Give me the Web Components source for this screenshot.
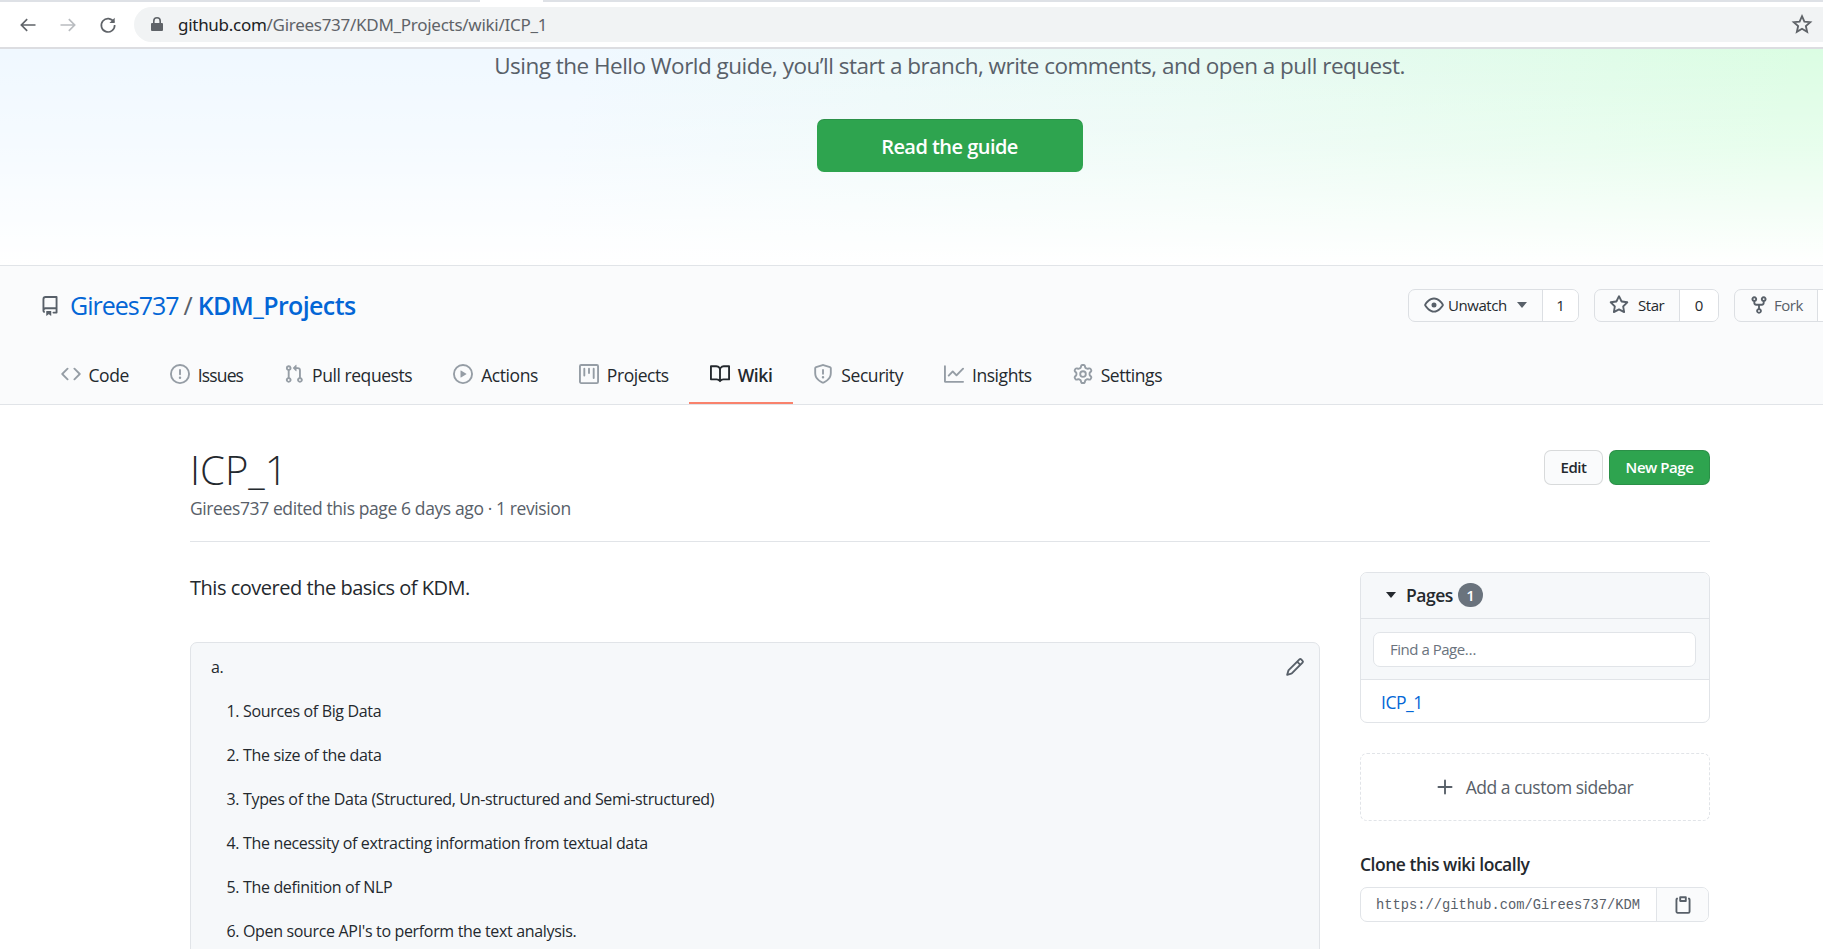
<!DOCTYPE html>
<html lang="en"><head><meta charset="utf-8"><title>ICP_1 · Girees737/KDM_Projects Wiki</title>
<style>
html{margin:0;padding:0;height:949px;overflow:hidden;background:#fff}
body{margin:0;padding:0;width:1899px;height:949px;overflow:hidden;font-family:"Open Sans","Noto Sans",sans-serif;color:#24292e}
browser-bar{width:1823px}
</style></head><body>
<browser-bar url-host="github.com" url-path="/Girees737/KDM_Projects/wiki/ICP_1"></browser-bar>
<hero-banner></hero-banner>
<repo-head>
  <repo-tab icon="code" slot="tabs">Code</repo-tab>
  <repo-tab icon="issue" slot="tabs" style="letter-spacing:-.05em">Issues</repo-tab>
  <repo-tab icon="pr" slot="tabs">Pull requests</repo-tab>
  <repo-tab icon="play" slot="tabs">Actions</repo-tab>
  <repo-tab icon="project" slot="tabs">Projects</repo-tab>
  <repo-tab icon="book" slot="tabs" selected>Wiki</repo-tab>
  <repo-tab icon="shield" slot="tabs">Security</repo-tab>
  <repo-tab icon="graph" slot="tabs">Insights</repo-tab>
  <repo-tab icon="gear" slot="tabs">Settings</repo-tab>
</repo-head>
<wiki-page>
  <wiki-markdown slot="main"></wiki-markdown>
  <wiki-sidebar slot="side"></wiki-sidebar>
</wiki-page>
<script>
const P={
repo:"M2 2.5A2.5 2.5 0 014.5 0h8.75a.75.75 0 01.75.75v12.5a.75.75 0 01-.75.75h-2.5a.75.75 0 110-1.5h1.75v-2h-8a1 1 0 00-.714 1.7.75.75 0 01-1.072 1.05A2.495 2.495 0 012 11.5v-9zm10.5-1V9h-8c-.356 0-.694.074-1 .208V2.5a1 1 0 011-1h8zM5 12.25v3.25a.25.25 0 00.4.2l1.45-1.087a.25.25 0 01.3 0L8.6 15.7a.25.25 0 00.4-.2v-3.25a.25.25 0 00-.25-.25h-3.5a.25.25 0 00-.25.25z",
code:"M4.72 3.22a.75.75 0 011.06 1.06L2.06 8l3.72 3.72a.75.75 0 11-1.06 1.06L.47 8.53a.75.75 0 010-1.06l4.25-4.25zm6.56 0a.75.75 0 10-1.06 1.06L13.94 8l-3.72 3.72a.75.75 0 101.06 1.06l4.25-4.25a.75.75 0 000-1.06l-4.25-4.25z",
issue:"M8 1.5a6.5 6.5 0 100 13 6.5 6.5 0 000-13zM0 8a8 8 0 1116 0A8 8 0 010 8zm9 3a1 1 0 11-2 0 1 1 0 012 0zm-.25-6.25a.75.75 0 00-1.5 0v3.5a.75.75 0 001.5 0v-3.5z",
pr:"M7.177 3.073L9.573.677A.25.25 0 0110 .854v4.792a.25.25 0 01-.427.177L7.177 3.427a.25.25 0 010-.354zM3.75 2.5a.75.75 0 100 1.5.75.75 0 000-1.5zm-2.25.75a2.25 2.25 0 113 2.122v5.256a2.251 2.251 0 11-1.5 0V5.372A2.25 2.25 0 011.5 3.25zM11 2.5h-1V4h1a1 1 0 011 1v5.628a2.251 2.251 0 101.5 0V5A2.5 2.5 0 0011 2.5zm1 10.25a.75.75 0 111.5 0 .75.75 0 01-1.5 0zM3.75 12a.75.75 0 100 1.5.75.75 0 000-1.5z",
play:"M1.5 8a6.5 6.5 0 1113 0 6.5 6.5 0 01-13 0zM8 0a8 8 0 100 16A8 8 0 008 0zM6.379 5.227A.25.25 0 006 5.442v5.117a.25.25 0 00.379.214l4.264-2.559a.25.25 0 000-.428L6.379 5.227z",
project:"M1.75 0A1.75 1.75 0 000 1.75v12.5C0 15.216.784 16 1.75 16h12.5A1.75 1.75 0 0016 14.25V1.75A1.75 1.75 0 0014.25 0H1.75zM1.5 1.75a.25.25 0 01.25-.25h12.5a.25.25 0 01.25.25v12.5a.25.25 0 01-.25.25H1.75a.25.25 0 01-.25-.25V1.75zM11.75 3a.75.75 0 00-.75.75v7.5a.75.75 0 001.5 0v-7.5a.75.75 0 00-.75-.75zm-8.25.75a.75.75 0 011.5 0v5.5a.75.75 0 01-1.5 0v-5.5zM8 3a.75.75 0 00-.75.75v3.5a.75.75 0 001.5 0v-3.5A.75.75 0 008 3z",
book:"M0 1.75A.75.75 0 01.75 1h4.253c1.227 0 2.317.59 3 1.501A3.744 3.744 0 0111.006 1h4.245a.75.75 0 01.75.75v10.5a.75.75 0 01-.75.75h-4.507a2.25 2.25 0 00-1.591.659l-.622.621a.75.75 0 01-1.06 0l-.622-.621A2.25 2.25 0 005.258 13H.75a.75.75 0 01-.75-.75V1.75zm8.755 3a2.25 2.25 0 012.25-2.25H14.5v9h-3.757c-.71 0-1.4.201-1.992.572l.004-7.322zm-1.504 7.324l.004-5.073-.002-2.253A2.25 2.25 0 005.003 2.5H1.5v9h3.757a3.75 3.75 0 011.994.574z",
shield:"M7.467.133a1.75 1.75 0 011.066 0l5.25 1.68A1.75 1.75 0 0115 3.48V7c0 1.566-.32 3.182-1.303 4.682-.983 1.498-2.585 2.813-5.032 3.855a1.7 1.7 0 01-1.33 0c-2.447-1.042-4.049-2.357-5.032-3.855C1.32 10.182 1 8.566 1 7V3.48a1.75 1.75 0 011.217-1.667l5.25-1.68zm.61 1.429a.25.25 0 00-.153 0l-5.25 1.68a.25.25 0 00-.174.238V7c0 1.358.275 2.666 1.057 3.86.784 1.194 2.121 2.34 4.366 3.297a.2.2 0 00.154 0c2.245-.956 3.582-2.104 4.366-3.298C13.225 9.666 13.5 8.36 13.5 7V3.48a.25.25 0 00-.174-.237l-5.25-1.68zM9 10.5a1 1 0 11-2 0 1 1 0 012 0zm-.25-5.75a.75.75 0 10-1.5 0v3a.75.75 0 001.5 0v-3z",
graph:"M1.5 1.75a.75.75 0 00-1.5 0v12.5c0 .414.336.75.75.75h14.5a.75.75 0 000-1.5H1.5V1.75zm14.28 2.53a.75.75 0 00-1.06-1.06L10 7.94 7.53 5.47a.75.75 0 00-1.06 0L3.22 8.72a.75.75 0 001.06 1.06L7 7.06l2.47 2.47a.75.75 0 001.06 0l5.25-5.25z",
gear:"M7.429 1.525a6.593 6.593 0 011.142 0c.036.003.108.036.137.146l.289 1.105c.147.56.55.967.997 1.189.174.086.341.183.501.29.417.278.97.423 1.53.27l1.102-.303c.11-.03.175.016.195.046.219.31.41.641.573.989.014.031.022.11-.059.19l-.815.806c-.411.406-.562.957-.53 1.456a4.588 4.588 0 010 .582c-.032.499.119 1.05.53 1.456l.815.806c.08.08.073.159.059.19a6.494 6.494 0 01-.573.99c-.02.029-.086.074-.195.045l-1.103-.303c-.559-.153-1.112-.008-1.529.27-.16.107-.327.204-.5.29-.449.222-.851.628-.998 1.189l-.289 1.105c-.029.11-.101.143-.137.146a6.613 6.613 0 01-1.142 0c-.036-.003-.108-.037-.137-.146l-.289-1.105c-.147-.56-.55-.967-.997-1.189a4.502 4.502 0 01-.501-.29c-.417-.278-.97-.423-1.53-.27l-1.102.303c-.11.03-.175-.016-.195-.046a6.492 6.492 0 01-.573-.989c-.014-.031-.022-.11.059-.19l.815-.806c.411-.406.562-.957.53-1.456a4.587 4.587 0 010-.582c.032-.499-.119-1.05-.53-1.456l-.815-.806c-.08-.08-.073-.159-.059-.19a6.44 6.44 0 01.573-.99c.02-.029.086-.075.195-.045l1.103.303c.559.153 1.112.008 1.529-.27.16-.107.327-.204.5-.29.449-.222.851-.628.998-1.189l.289-1.105c.029-.11.101-.143.137-.146zM8 0c-.236 0-.47.01-.701.03-.743.065-1.29.615-1.458 1.261l-.29 1.106c-.017.066-.078.158-.211.224a5.994 5.994 0 00-.668.386c-.123.082-.233.09-.3.071L3.27 2.776c-.644-.177-1.392.02-1.82.63a7.977 7.977 0 00-.704 1.217c-.315.675-.111 1.422.363 1.891l.815.806c.05.048.098.147.088.294a6.084 6.084 0 000 .772c.01.147-.038.246-.088.294l-.815.806c-.474.469-.678 1.216-.363 1.891.2.428.436.835.704 1.218.428.609 1.176.806 1.82.63l1.103-.303c.066-.019.176-.011.299.071.213.143.436.272.668.386.133.066.194.158.212.224l.289 1.106c.169.646.715 1.196 1.458 1.26a8.094 8.094 0 001.402 0c.743-.064 1.29-.614 1.458-1.26l.29-1.106c.017-.066.078-.158.211-.224a5.98 5.98 0 00.668-.386c.123-.082.233-.09.3-.071l1.102.302c.644.177 1.392-.02 1.82-.63.268-.382.505-.789.704-1.217.315-.675.111-1.422-.364-1.891l-.814-.806c-.05-.048-.098-.147-.088-.294a6.1 6.1 0 000-.772c-.01-.147.039-.246.088-.294l.814-.806c.475-.469.679-1.216.364-1.891a7.992 7.992 0 00-.704-1.218c-.428-.609-1.176-.806-1.82-.63l-1.103.303c-.066.019-.176.011-.299-.071a5.991 5.991 0 00-.668-.386c-.133-.066-.194-.158-.212-.224L10.16 1.29C9.99.645 9.444.095 8.701.031A8.094 8.094 0 008 0zm1.5 8a1.5 1.5 0 11-3 0 1.5 1.5 0 013 0zM11 8a3 3 0 11-6 0 3 3 0 016 0z",
eye:"M1.679 7.932c.412-.621 1.242-1.75 2.366-2.717C5.175 4.242 6.527 3.5 8 3.5c1.473 0 2.824.742 3.955 1.715 1.124.967 1.954 2.096 2.366 2.717a.119.119 0 010 .136c-.412.621-1.242 1.75-2.366 2.717C10.825 11.758 9.473 12.5 8 12.5c-1.473 0-2.824-.742-3.955-1.715C2.92 9.818 2.09 8.69 1.679 8.068a.119.119 0 010-.136zM8 2c-1.981 0-3.67.992-4.933 2.078C1.797 5.169.88 6.423.43 7.1a1.619 1.619 0 000 1.798c.45.678 1.367 1.932 2.637 3.024C4.329 13.008 6.019 14 8 14c1.981 0 3.67-.992 4.933-2.078 1.27-1.091 2.187-2.345 2.637-3.023a1.619 1.619 0 000-1.798c-.45-.678-1.367-1.932-2.637-3.023C11.671 2.992 9.981 2 8 2zm0 8a2 2 0 100-4 2 2 0 000 4z",
star:"M8 .25a.75.75 0 01.673.418l1.882 3.815 4.21.612a.75.75 0 01.416 1.279l-3.046 2.97.719 4.192a.75.75 0 01-1.088.791L8 12.347l-3.766 1.98a.75.75 0 01-1.088-.79l.72-4.194L.818 6.374a.75.75 0 01.416-1.28l4.21-.611L7.327.668A.75.75 0 018 .25zm0 2.445L6.615 5.5a.75.75 0 01-.564.41l-3.097.45 2.24 2.184a.75.75 0 01.216.664l-.528 3.084 2.769-1.456a.75.75 0 01.698 0l2.77 1.456-.53-3.084a.75.75 0 01.216-.664l2.24-2.183-3.096-.45a.75.75 0 01-.564-.41L8 2.694z",
fork:"M5 3.25a.75.75 0 11-1.5 0 .75.75 0 011.5 0zm0 2.122a2.25 2.25 0 10-1.5 0v.878A2.25 2.25 0 005.75 8.5h1.5v2.128a2.251 2.251 0 101.5 0V8.5h1.5a2.25 2.25 0 002.25-2.25v-.878a2.25 2.25 0 10-1.5 0v.878a.75.75 0 01-.75.75h-4.5A.75.75 0 015 6.25v-.878zm3.75 7.378a.75.75 0 11-1.5 0 .75.75 0 011.5 0zm3-8.75a.75.75 0 100-1.5.75.75 0 000 1.5z",
pencil:"M11.013 1.427a1.75 1.75 0 012.474 0l1.086 1.086a1.75 1.75 0 010 2.474l-8.61 8.61c-.21.21-.47.364-.756.445l-3.251.93a.75.75 0 01-.927-.928l.929-3.25a1.75 1.75 0 01.445-.758l8.61-8.61zm1.414 1.06a.25.25 0 00-.354 0L10.811 3.75l1.439 1.44 1.263-1.263a.25.25 0 000-.354l-1.086-1.086zM11.189 6.25L9.75 4.81l-6.286 6.287a.25.25 0 00-.064.108l-.558 1.953 1.953-.558a.249.249 0 00.108-.064l6.286-6.286z",
clippy:"M5.75 1a.75.75 0 00-.75.75v3c0 .414.336.75.75.75h4.5a.75.75 0 00.75-.75v-3a.75.75 0 00-.75-.75h-4.5zm.75 3V2.5h3V4h-3zm-2.874-.467a.75.75 0 00-.752-1.298A1.75 1.75 0 002 3.75v9.5c0 .966.784 1.75 1.75 1.75h8.5A1.75 1.75 0 0014 13.25v-9.5a1.75 1.75 0 00-.874-1.515.75.75 0 10-.752 1.298.25.25 0 01.126.217v9.5a.25.25 0 01-.25.25h-8.5a.25.25 0 01-.25-.25v-9.5a.25.25 0 01.126-.217z",
plus:"M8 2a.75.75 0 01.75.75v4.5h4.5a.75.75 0 010 1.5h-4.5v4.5a.75.75 0 01-1.5 0v-4.5h-4.5a.75.75 0 010-1.5h4.5v-4.5A.75.75 0 018 2z"
};
const SANS='"Open Sans","Noto Sans",sans-serif';
function def(name,html,extra){
  const t=document.createElement('template');t.innerHTML=html;
  customElements.define(name,class extends HTMLElement{
    constructor(){super();this.attachShadow({mode:'open'}).appendChild(t.content.cloneNode(true));}
    connectedCallback(){if(extra)extra.call(this)}
  });
}
customElements.define('gh-icon',class extends HTMLElement{
  static get observedAttributes(){return ['name','size']}
  constructor(){super();this.attachShadow({mode:'open'})}
  connectedCallback(){this.render()}
  attributeChangedCallback(){this.render()}
  render(){
    const s=this.getAttribute('size')||20,n=this.getAttribute('name');
    this.shadowRoot.innerHTML=`<style>:host{display:inline-flex;flex:none;width:${s}px;height:${s}px;color:inherit}svg{display:block;fill:currentColor}</style><svg width="${s}" height="${s}" viewBox="0 0 16 16" aria-hidden="true"><path fill-rule="evenodd" d="${P[n]||''}"/></svg>`;
  }
});
def('browser-bar',`<style>
:host{display:block;height:49px;box-sizing:border-box;background:#fff;border-bottom:2px solid #dcdde1;position:relative;font-family:"Noto Sans",sans-serif}
.strip{height:2px;background:#dee1e6;display:flex}
.strip i{display:block;margin-left:480px;width:63px;height:2px;background:#fff}
.row{display:flex;align-items:center;height:45px}
.nav{display:flex;align-items:center;width:134px;padding-left:18px;box-sizing:border-box;gap:20px}
.nav svg{display:block;width:20px;height:20px;flex:none}
.pill{flex:1;height:35px;margin-top:-1px;background:#f1f3f4;border-radius:18px 0 0 18px;display:flex;align-items:center;position:relative}
.lock{margin-left:17px;width:12px;height:14px;flex:none}
.url{margin-left:15px;font-size:17px;letter-spacing:-.28px;color:#202124;white-space:nowrap}
.url span{color:#5f6368}
.star{margin-left:auto;margin-right:10px;width:22px;height:22px;flex:none}
</style>
<div class="strip"><i></i></div>
<div class="row">
 <div class="nav">
  <svg viewBox="0 0 24 24" fill="none" stroke="#5f6368" stroke-width="2"><path d="M21 12H4M11 5l-7 7 7 7"/></svg>
  <svg viewBox="0 0 24 24" fill="none" stroke="#b9bcc0" stroke-width="2"><path d="M3 12h17M13 5l7 7-7 7"/></svg>
  <svg viewBox="0 0 24 24" fill="none" stroke="#5f6368" stroke-width="2"><path d="M19 8.5A8 8 0 1 0 20 12"/><path d="M20 3.2v6.3h-6.3z" fill="#5f6368" stroke="none"/></svg>
 </div>
 <div class="pill">
  <svg class="lock" viewBox="0 0 12 14" fill="#5f6368"><path d="M2 6V4a4 4 0 0 1 8 0v2h1a1 1 0 0 1 1 1v6a1 1 0 0 1-1 1H1a1 1 0 0 1-1-1V7a1 1 0 0 1 1-1zm1.6 0h4.8V4a2.4 2.4 0 0 0-4.8 0z"/></svg>
  <div class="url">github.com<span>/Girees737/KDM_Projects/wiki/ICP_1</span></div>
  <svg class="star" viewBox="0 0 24 24" fill="none" stroke="#5f6368" stroke-width="2"><path d="M12 3.5l2.6 5.9 6.4.6-4.8 4.2 1.4 6.3L12 17.2l-5.6 3.3 1.4-6.3L3 10l6.4-.6z"/></svg>
 </div>
</div>`);
def('hero-banner',`<style>
:host{display:block;height:216px;box-sizing:border-box;background:linear-gradient(to bottom,rgba(255,255,255,0) 0%,rgba(255,255,255,.35) 45%,#fff 100%),linear-gradient(105deg,#f0f8ff 0%,#f0f8ff 30%,#e8faf3 62%,#dbfde3 92%);text-align:center;font-family:${SANS}}
p{margin:0;padding-top:1px;font-size:22.5px;line-height:32px;color:#586069;letter-spacing:-.023em}
a{display:inline-block;box-sizing:border-box;margin-top:37px;width:266px;height:53px;line-height:53px;border-top:1px solid rgba(27,31,35,.15);border-radius:7px;background:#2ea44f;color:#fff;font-size:20px;font-weight:600;letter-spacing:-.027em;text-decoration:none}
</style><p>Using the Hello World guide, you’ll start a branch, write comments, and open a pull request.</p><a href="#">Read the guide</a>`);
def('gh-counter',`<style>
:host{display:inline-flex;flex:none;height:33px;box-sizing:border-box;border:1px solid #dcdfe3;border-radius:7px;background:#fafbfc;font-size:15px;font-weight:500;color:#24292e;overflow:hidden}
.l{display:flex;align-items:center;box-sizing:border-box;height:100%;padding-bottom:2px;border-right:1px solid #dcdfe3;white-space:nowrap;letter-spacing:-.03em}
.c{display:flex;align-items:center;justify-content:center;box-sizing:border-box;padding-bottom:2px;background:#fff;font-size:15px}
</style><div class="l"><slot></slot></div><div class="c"><slot name="count"></slot></div>`,function(){
  const r=this.shadowRoot;r.querySelector('.l').style.width=this.getAttribute('lw')+'px';r.querySelector('.l').style.paddingLeft=this.getAttribute('pl')+'px';r.querySelector('.c').style.width=this.getAttribute('cw')+'px';
});
def('repo-head',`<style>
:host{display:block;height:140px;box-sizing:border-box;background:#fafbfc;border-top:1px solid #e1e4e8;border-bottom:1px solid #e1e4e8;font-family:${SANS}}
.top{display:flex;align-items:center;height:33px;padding:23px 40px 0 40px}
.title{display:flex;align-items:center;font-size:25px;letter-spacing:-.04em;line-height:33px}
.title a{color:#0366d6;text-decoration:none}
.title b{font-weight:600;letter-spacing:-.025em}
.title span{color:#586069;margin:0 6px 0 5px}
.title gh-icon{color:#586069;margin-right:10px}
.act{margin-left:auto;display:flex;gap:15px;flex:none}
.act gh-icon{color:#586069}
.fork{color:#586069}
nav{display:flex;margin-top:24px;padding-left:40px;height:58px;box-sizing:border-box}
</style>
<div class="top">
 <div class="title"><gh-icon name="repo" size="20"></gh-icon><a href="#">Girees737</a><span>/</span><a href="#"><b>KDM_Projects</b></a></div>
 <div class="act">
  <gh-counter lw="134" pl="15" cw="35"><gh-icon name="eye" style="margin-right:4px"></gh-icon>Unwatch<svg width="10" height="6" viewBox="0 0 10 6" style="margin-left:10px;fill:#586069"><path d="M0 0h10L5 6z"/></svg><span slot="count">1</span></gh-counter>
  <gh-counter lw="85" pl="14" cw="38"><gh-icon name="star" style="margin-right:9px"></gh-icon>Star<span slot="count">0</span></gh-counter>
  <gh-counter lw="83" pl="14" cw="40"><gh-icon name="fork" style="margin-right:5px"></gh-icon><span class="fork">Fork</span></gh-counter>
 </div>
</div>
<nav><slot name="tabs"></slot></nav>`);
def('repo-tab',`<style>
:host{display:flex;align-items:center;box-sizing:border-box;height:100%;padding:2px 20.5px 0;gap:8px;font-size:17.5px;letter-spacing:-.025em;color:#24292e;white-space:nowrap;border-bottom:2px solid transparent}
:host([selected]){border-bottom-color:#f9826c;font-weight:600}
gh-icon{color:#959da5;margin-top:-2px}
:host([selected]) gh-icon{color:#24292e}
</style><gh-icon size="20"></gh-icon><slot></slot>`,function(){this.shadowRoot.querySelector('gh-icon').setAttribute('name',this.getAttribute('icon'))});
def('wiki-page',`<style>
:host{display:block;padding:0 189px 0 190px;font-family:${SANS}}
.head{display:flex;align-items:flex-start;height:137px;box-sizing:border-box;border-bottom:1px solid #e1e4e8;padding-top:42px}
.t{flex:1}
h1{margin:0;font-size:40px;font-weight:300;line-height:46px;color:#24292e}
.sub{font-size:17.5px;line-height:24px;margin-top:3px;color:#586069;letter-spacing:-.0225em}
.btns{display:flex;gap:6px;margin-top:3px}
.btn{box-sizing:border-box;height:35px;line-height:33px;border-radius:7px;border:1px solid rgba(27,31,35,.15);font-size:15px;font-weight:600;text-align:center;letter-spacing:-.03em}
.edit{width:59px;background:#fafbfc;color:#24292e}
.new{width:101px;background:#2ea44f;color:#fff}
.cols{display:flex;gap:40px;align-items:flex-start}
.m{flex:0 0 1130px;min-width:0}
.s{flex:0 0 350px;padding-top:30px}
</style>
<div class="head"><div class="t"><h1>ICP_1</h1><div class="sub">Girees737 edited this page 6 days ago · 1 revision</div></div>
<div class="btns"><div class="btn edit">Edit</div><div class="btn new">New Page</div></div></div>
<div class="cols"><div class="m"><slot name="main"></slot></div><div class="s"><slot name="side"></slot></div></div>`);
def('wiki-markdown',`<style>
:host{display:block;font-family:${SANS};color:#24292e}
p.lead{margin:0;padding-top:32px;font-size:20px;line-height:28px;height:100px;box-sizing:border-box;letter-spacing:-.024em}
.box{position:relative;box-sizing:border-box;border:1px solid #e1e4e8;border-radius:7px;background:#f6f8fa;padding:2px 21px 0 20px;height:480px;font-size:16px;line-height:44px;letter-spacing:-.021em}
.box p{margin:0}
ol{margin:0;padding:0 0 0 32px}
.pen{position:absolute;top:14px;right:14px;color:#586069}
</style>
<p class="lead">This covered the basics of KDM.</p>
<div class="box"><gh-icon class="pen" name="pencil"></gh-icon>
<p>a.</p>
<ol><li>Sources of Big Data</li><li>The size of the data</li><li>Types of the Data (Structured, Un-structured and Semi-structured)</li><li>The necessity of extracting information from textual data</li><li>The definition of NLP</li><li>Open source API's to perform the text analysis.</li></ol>
</div>`);
def('wiki-sidebar',`<style>
:host{display:block;font-family:${SANS};color:#24292e;letter-spacing:-.03em}
.pages{box-sizing:border-box;border:1px solid #e1e4e8;border-radius:7px;height:151px;overflow:hidden;background:#fff}
.ph{display:flex;align-items:center;height:46px;box-sizing:border-box;background:#f6f8fa;border-bottom:1px solid #e1e4e8;padding:0 0 1px 25px;font-size:17.5px;font-weight:600}
.ph svg{margin-right:10px;fill:#24292e;flex:none}
.badge{margin-left:5px;width:25px;height:24px;border-radius:12px;background:#6a737d;color:#fff;font-size:15px;text-align:center;line-height:24px;font-weight:600}
.ps{height:61px;box-sizing:border-box;background:#f6f8fa;border-bottom:1px solid #e1e4e8;padding:13px 13px 0 12px}
.inp{height:35px;box-sizing:border-box;border:1px solid #e1e4e8;border-radius:7px;background:#fff;padding-left:16px;font-size:15px;line-height:33px;color:#6a737d}
.pl{display:block;padding:1px 0 0 20px;font-size:17.5px;line-height:42px;color:#0366d6;text-decoration:none;font-weight:500}
.add{margin-top:30px;height:68px;box-sizing:border-box;border:1px dashed #e1e4e8;border-radius:7px;display:flex;align-items:center;justify-content:center;gap:11px;padding-right:2px;font-size:17.5px;color:#586069}
.clone{margin:31px 0 11px;font-size:17.5px;font-weight:600;line-height:24px}
.cr{display:flex;height:35px;width:349px;box-sizing:border-box;border:1px solid #e1e4e8;border-radius:7px;overflow:hidden}
.u{width:295px;flex:none;box-sizing:border-box;padding:1px 15px 0;font-family:"Liberation Mono",monospace;font-size:13.75px;line-height:33px;color:#586069;letter-spacing:0;white-space:nowrap}
.cb{flex:1;border-left:1px solid #e1e4e8;background:#fafbfc;display:flex;align-items:center;justify-content:center;color:#586069}
</style>
<div class="pages"><div class="ph"><svg width="10" height="6" viewBox="0 0 10 6"><path d="M0 0h10L5 6z"/></svg>Pages<span class="badge">1</span></div>
<div class="ps"><div class="inp">Find a Page…</div></div><a class="pl" href="#">ICP_1</a></div>
<div class="add"><gh-icon name="plus"></gh-icon><span>Add a custom sidebar</span></div>
<div class="clone">Clone this wiki locally</div>
<div class="cr"><div class="u">https://github.com/Girees737/KDM</div><div class="cb"><gh-icon name="clippy"></gh-icon></div></div>`);
</script>
</body></html>
